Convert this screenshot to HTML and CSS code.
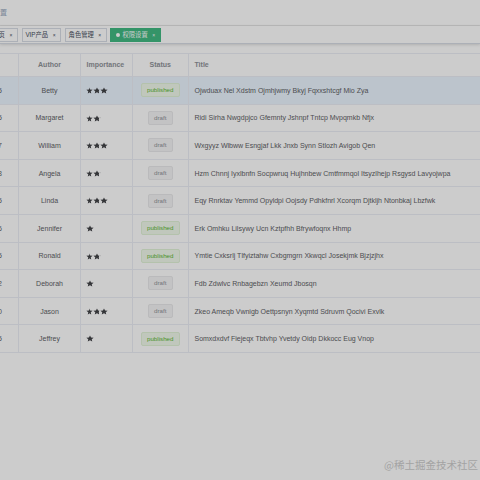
FILE: index.html
```html
<!DOCTYPE html>
<html lang="zh">
<head>
<meta charset="utf-8">
<link rel="stylesheet" href="styles.css">
</head>
<body>
<div class="app">
  <div class="navbar"><span class="crumb">权限设置</span></div>
  <div class="tags-view">
    <span class="tag first">首页<span class="close">×</span></span>
    <span class="tag">VIP产品<span class="close">×</span></span>
    <span class="tag">角色管理<span class="close">×</span></span>
    <span class="tag active"><span class="dot"></span>权限设置<span class="close">×</span></span>
  </div>
  <div class="main">
    <table class="grid">
      <colgroup>
        <col class="c-id"><col class="c-author"><col class="c-imp"><col class="c-status"><col class="c-title">
      </colgroup>
      <thead>
        <tr><th class="center id-head">ID</th><th class="center">Author</th><th>Importance</th><th class="center">Status</th><th>Title</th></tr>
      </thead>
      <tbody>
        <tr class="current"><td class="center">25</td><td class="center">Betty</td><td><span class="stars s3"></span></td><td class="center"><span class="st pub">published</span></td><td>Ojwduax Nel Xdstm Ojmhjwmy Bkyj Fqxxshtcgf Mio Zya</td></tr>
        <tr><td class="center">15</td><td class="center">Margaret</td><td><span class="stars s2"></span></td><td class="center"><span class="st draft">draft</span></td><td>Ridi Sirha Nwgdpjco Gfemnty Jshnpf Tntcp Mvpqmkb Nfjx</td></tr>
        <tr><td class="center">17</td><td class="center">William</td><td><span class="stars s3"></span></td><td class="center"><span class="st draft">draft</span></td><td>Wxgyyz Wlbww Esngjaf Lkk Jnxb Synn Stlozh Avigob Qen</td></tr>
        <tr><td class="center">18</td><td class="center">Angela</td><td><span class="stars s2"></span></td><td class="center"><span class="st draft">draft</span></td><td>Hzm Chnnj Iyxlbnfn Socpwruq Hujhnbew Cmtfmmqol Itsyzlhejp Rsgysd Lavyojwpa</td></tr>
        <tr><td class="center">15</td><td class="center">Linda</td><td><span class="stars s3"></span></td><td class="center"><span class="st draft">draft</span></td><td>Eqy Rnrktav Yemmd Opyldpi Oojsdy Pdhkfnrl Xcorqm Djtkljh Ntonbkaj Lbzfwk</td></tr>
        <tr><td class="center">16</td><td class="center">Jennifer</td><td><span class="stars s1"></span></td><td class="center"><span class="st pub">published</span></td><td>Erk Omhku Lilsywy Ucn Kztpfhh Bfrywfoqnx Hhmp</td></tr>
        <tr><td class="center">15</td><td class="center">Ronald</td><td><span class="stars s2"></span></td><td class="center"><span class="st pub">published</span></td><td>Ymtie Cxksrlj Tlfyiztahw Cxbgmgrn Xkwqcl Josekjmk Bjzjzjhx</td></tr>
        <tr><td class="center">12</td><td class="center">Deborah</td><td><span class="stars s1"></span></td><td class="center"><span class="st draft">draft</span></td><td>Fdb Zdwlvc Rnbagebzn Xeumd Jbosqn</td></tr>
        <tr><td class="center">10</td><td class="center">Jason</td><td><span class="stars s3"></span></td><td class="center"><span class="st draft">draft</span></td><td>Zkeo Ameqb Vwnigb Oettpsnyn Xyqmtd Sdruvm Qocivi Exvlk</td></tr>
        <tr><td class="center">15</td><td class="center">Jeffrey</td><td><span class="stars s1"></span></td><td class="center"><span class="st pub">published</span></td><td>Somxdxdvf Fiejeqx Tbtvhp Yvetdy Oidp Dkkocc Eug Vnop</td></tr>
      </tbody>
    </table>
  </div>
</div>
<div class="mask"></div>
<div class="watermark">@稀土掘金技术社区</div>
</body>
</html>
```
FILE: styles.css
```css
html, body {
  margin: 0;
  padding: 0;
}
body {
  width: 480px;
  height: 480px;
  overflow: hidden;
  background: #ffffff;
  font-family: "Liberation Sans", Arial, "Noto Sans CJK SC", sans-serif;
  position: relative;
}
.app {
  width: 480px;
  height: 480px;
  overflow: hidden;
}
.navbar {
  height: 25px;
  border-bottom: 1px solid #e9e9e9;
  display: flex;
  align-items: center;
}
.crumb {
  font-size: 7px;
  color: #97a8be;
  margin-left: -21px;
  font-family: "Noto Sans CJK SC", sans-serif;
  line-height: 1;
}
.tags-view {
  height: 17px;
  border-bottom: 1px solid #d8dce5;
  box-shadow: 0 1px 3px 0 rgba(0,0,0,.12), 0 0 3px 0 rgba(0,0,0,.04);
  display: flex;
  align-items: center;
  gap: 3.5px;
  white-space: nowrap;
}
.tag {
  box-sizing: border-box;
  height: 14px;
  border: 1px solid #d8dce5;
  background: #fff;
  color: #495060;
  font-size: 6.3px;
  font-family: "Liberation Sans", "Noto Sans CJK SC", sans-serif;
  display: inline-flex;
  align-items: center;
  padding: 0 0 0 2.8px;
  flex: none;
}
.tag.first {
  margin-left: -11.5px;
}
.close {
  display: inline-block;
  width: 10px;
  text-align: center;
  font-size: 5px;
  margin-left: 1px;
  margin-right: 1.2px;
}
.tag.active {
  background: #42b983;
  border-color: #42b983;
  color: #fff;
  padding-left: 4.5px;
}
.dot {
  width: 4px;
  height: 4px;
  border-radius: 50%;
  background: #fff;
  margin-right: 2.5px;
}
.main {
  padding-top: 8.5px;
}
.grid {
  border-collapse: collapse;
  table-layout: fixed;
  width: 640px;
  margin-left: -23px;
  font-size: 7px;
  color: #606266;
}
.c-id { width: 41.3px; }
.c-author { width: 62px; }
.c-imp { width: 51.4px; }
.c-status { width: 56.6px; }
.c-title { width: 428.7px; }
.grid th, .grid td {
  border: 1px solid #ebeef5;
  padding: 0 5.7px 0 5.2px;
  white-space: nowrap;
  overflow: hidden;
  text-align: left;
}
.grid th {
  height: 22.5px;
  color: #909399;
  font-weight: bold;
}
.grid th.id-head {
  padding-right: 12px;
}
.grid td {
  height: 26.6px;
}
.grid .center {
  text-align: center;
}
.grid tr.current td {
  background: #ecf5ff;
}
.stars {
  display: inline-block;
  height: 7.2px;
  vertical-align: middle;
  background-image: url("data:image/svg+xml;utf8,<svg xmlns='http://www.w3.org/2000/svg' width='24' height='24' viewBox='0 0 24 24'><path fill='%23434448' d='M12 1.3L15.23 8.35 22.94 9.25 17.23 14.5 18.76 22.1 12 18.3 5.24 22.1 6.77 14.5 1.06 9.25 8.77 8.35z'/></svg>");
  background-repeat: repeat-x;
  background-size: 7.2px 7.2px;
}
.s1 { width: 7.2px; }
.s2 { width: 14.4px; }
.s3 { width: 21.6px; }
.st {
  display: inline-block;
  box-sizing: border-box;
  height: 14px;
  line-height: 12px;
  padding: 0 5.4px;
  font-size: 6.2px;
  border: 1px solid;
  border-radius: 2px;
  vertical-align: middle;
}
.st.pub {
  background: #f0f9eb;
  border-color: #e1f3d8;
  color: #5fb832;
}
.st.draft {
  background: #f4f4f5;
  border-color: #e9e9eb;
  color: #909399;
}
.mask {
  position: absolute;
  left: 0;
  top: 0;
  width: 480px;
  height: 480px;
  background: rgba(0,0,0,0.2);
}
.watermark {
  position: absolute;
  right: 2px;
  top: 458px;
  font-size: 10.5px;
  line-height: 14px;
  color: #a3a3a3;
  font-family: "Noto Sans CJK SC", sans-serif;
  white-space: nowrap;
}
```
